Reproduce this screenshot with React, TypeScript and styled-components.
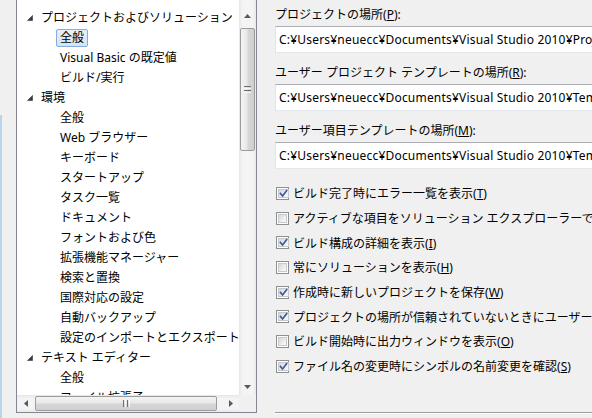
import React from 'react';
import styled, { createGlobalStyle } from 'styled-components';

const GlobalStyle = createGlobalStyle`
  html, body {
    margin: 0;
    padding: 0;
    background: #f0f0f0;
    overflow: hidden;
  }
  body {
    width: 592px;
    height: 418px;
    font-family: "Noto Sans", "Noto Sans CJK JP", sans-serif;
    font-size: 12px;
    color: #000;
  }
`;

const Window = styled.div`
  display: flex;
  align-items: flex-start;
  width: 592px;
  height: 418px;
  overflow: hidden;
`;

const Sidebar = styled.div`
  flex: 0 0 257px;
  height: 418px;
  box-sizing: border-box;
  padding-left: 16px;
  background: linear-gradient(#bcd3ec, #bcd3ec) no-repeat 0 115px / 2px 100%;
`;

const TreePanel = styled.div`
  margin-top: -1px;
  width: 241px;
  height: 414px;
  box-sizing: border-box;
  border: 1px solid #828790;
  background: #fff;
  display: grid;
  grid-template-columns: 1fr 17px;
  grid-template-rows: 1fr 17px;
  overflow: hidden;
`;

const TreeBody = styled.div`
  padding-top: 8px;
  overflow: hidden;
  white-space: nowrap;
`;

const TreeRow = styled.div<{ $level: number }>`
  display: flex;
  align-items: center;
  height: 20px;
  padding-left: ${({ $level }) => ($level === 0 ? 10 : 39)}px;
`;

const Expander = styled.svg`
  flex: 0 0 6px;
  width: 6px;
  height: 6px;
  margin-right: 4px;
  margin-top: -1px;
`;

const NodeLabel = styled.span<{ $selected?: boolean }>`
  display: inline-block;
  height: 16px;
  line-height: 16px;
  padding: 0 3px;
  border: 1px solid ${({ $selected }) => ($selected ? '#84acdd' : 'transparent')};
  border-radius: 2px;
  background: ${({ $selected }) =>
    $selected ? 'linear-gradient(#e6f0fb, #d3e4f8)' : 'transparent'};
`;

const VScroll = styled.div`
  display: flex;
  flex-direction: column;
  align-items: center;
  background: linear-gradient(to right, #e6e6e6, #f4f4f4 20%, #f4f4f4 80%, #e9e9e9);
`;

const HScroll = styled.div`
  display: flex;
  align-items: center;
  background: linear-gradient(#e6e6e6, #f4f4f4 20%, #f4f4f4 80%, #e9e9e9);
`;

const Corner = styled.div`
  background: #f0f0f0;
`;

const ArrowCell = styled.div`
  flex: 0 0 17px;
  width: 17px;
  height: 17px;
  display: flex;
  align-items: center;
  justify-content: center;
`;

const TopArrowCell = styled.div`
  flex: 0 0 27px;
  display: flex;
  justify-content: center;
  padding-top: 14px;
  box-sizing: border-box;
`;

const Spacer = styled.div`
  flex: 1;
`;

const VThumb = styled.div`
  margin-top: 1px;
  width: 15px;
  height: 123px;
  box-sizing: border-box;
  border: 1px solid #9b9b9b;
  border-radius: 2px;
  background: linear-gradient(to right, #f4f4f4, #e8e8e8 45%, #d6d6d6 55%, #cfcfcf);
  display: flex;
  align-items: center;
  justify-content: center;
`;

const HThumb = styled.div`
  margin-left: 1px;
  width: 182px;
  height: 15px;
  box-sizing: border-box;
  border: 1px solid #9b9b9b;
  border-radius: 2px;
  background: linear-gradient(#f4f4f4, #e8e8e8 45%, #d6d6d6 55%, #cfcfcf);
  display: flex;
  align-items: center;
  justify-content: center;
`;

const Content = styled.div`
  flex: 0 0 340px;
  margin-left: 18px;
  padding-top: 5px;
  white-space: nowrap;
`;

const FieldLabel = styled.div`
  height: 20px;
  line-height: 20px;
`;

const PathBox = styled.div`
  margin-top: 1px;
  margin-bottom: 10px;
  height: 27px;
  box-sizing: border-box;
  padding-left: 3px;
  line-height: 26px;
  letter-spacing: 0.2px;
  background: #fff;
  border: 1px solid #dbdfe6;
  border-top-color: #abadb3;
  border-left-color: #e2e3ea;
  border-bottom-color: #e3e9ef;
  overflow: hidden;
`;

const CheckList = styled.div`
  margin-top: 12px;
`;

const CheckRow = styled.div`
  display: flex;
  align-items: center;
  height: 24.7px;
  padding-left: 1px;
`;

const Box = styled.span`
  flex: 0 0 13px;
  width: 13px;
  height: 13px;
  margin-right: 4px;
  box-sizing: border-box;
  border: 1px solid #8e8f8f;
  background: #fff;
  padding: 1px;
  display: flex;
`;

const BoxInner = styled.span`
  flex: 1;
  border: 1px solid #c6c9cd;
  background: linear-gradient(135deg, #d4d7db, #f2f2f2 70%, #fafafa);
  display: flex;
  align-items: center;
  justify-content: center;
`;

const Separator = styled.div`
  margin-top: 33px;
  border-top: 1px solid #a0a0a0;
  border-bottom: 1px solid #fff;
`;

type Node = { label: string; level: number; selected?: boolean };

const nodes: Node[] = [
  { label: 'プロジェクトおよびソリューション', level: 0 },
  { label: '全般', level: 1, selected: true },
  { label: 'Visual Basic の既定値', level: 1 },
  { label: 'ビルド/実行', level: 1 },
  { label: '環境', level: 0 },
  { label: '全般', level: 1 },
  { label: 'Web ブラウザー', level: 1 },
  { label: 'キーボード', level: 1 },
  { label: 'スタートアップ', level: 1 },
  { label: 'タスク一覧', level: 1 },
  { label: 'ドキュメント', level: 1 },
  { label: 'フォントおよび色', level: 1 },
  { label: '拡張機能マネージャー', level: 1 },
  { label: '検索と置換', level: 1 },
  { label: '国際対応の設定', level: 1 },
  { label: '自動バックアップ', level: 1 },
  { label: '設定のインポートとエクスポート', level: 1 },
  { label: 'テキスト エディター', level: 0 },
  { label: '全般', level: 1 },
  { label: 'ファイル拡張子', level: 1 },
];

const fields = [
  { label: 'プロジェクトの場所', key: 'P', path: 'C:¥Users¥neuecc¥Documents¥Visual Studio 2010¥Projects' },
  { label: 'ユーザー プロジェクト テンプレートの場所', key: 'R', path: 'C:¥Users¥neuecc¥Documents¥Visual Studio 2010¥Templates¥ProjectTemplates' },
  { label: 'ユーザー項目テンプレートの場所', key: 'M', path: 'C:¥Users¥neuecc¥Documents¥Visual Studio 2010¥Templates¥ItemTemplates' },
];

const options = [
  { label: 'ビルド完了時にエラー一覧を表示', key: 'T', checked: true },
  { label: 'アクティブな項目をソリューション エクスプローラーで選択された状態にする', key: 'K', checked: false },
  { label: 'ビルド構成の詳細を表示', key: 'I', checked: true },
  { label: '常にソリューションを表示', key: 'H', checked: false },
  { label: '作成時に新しいプロジェクトを保存', key: 'W', checked: true },
  { label: 'プロジェクトの場所が信頼されていないときにユーザーに警告する', key: 'N', checked: true },
  { label: 'ビルド開始時に出力ウィンドウを表示', key: 'O', checked: false },
  { label: 'ファイル名の変更時にシンボルの名前変更を確認', key: 'S', checked: true },
];

const Tri = ({ dir }: { dir: 'up' | 'down' | 'left' | 'right' }) => {
  const pts = {
    up: '0,4 3.5,0 7,4',
    down: '0,0 7,0 3.5,4',
    left: '4,0 4,7 0,3.5',
    right: '0,0 0,7 4,3.5',
  }[dir];
  const vertical = dir === 'up' || dir === 'down';
  return (
    <svg width={vertical ? 7 : 4} height={vertical ? 4 : 7} viewBox={vertical ? '0 0 7 4' : '0 0 4 7'}>
      <polygon points={pts} fill="#5a5a5a" />
    </svg>
  );
};

const Grip = ({ vertical }: { vertical?: boolean }) =>
  vertical ? (
    <svg width="7" height="7" viewBox="0 0 7 7">
      {[0, 2, 4, 6].map((y) => (
        <line key={y} x1="0" x2="7" y1={y + 0.5} y2={y + 0.5} stroke={y % 4 === 0 ? '#6f6f6f' : '#f8f8f8'} />
      ))}
    </svg>
  ) : (
    <svg width="7" height="7" viewBox="0 0 7 7">
      {[0, 2, 4, 6].map((x) => (
        <line key={x} y1="0" y2="7" x1={x + 0.5} x2={x + 0.5} stroke={x % 4 === 0 ? '#6f6f6f' : '#f8f8f8'} />
      ))}
    </svg>
  );

const Check = () => (
  <svg width="9" height="9" viewBox="0 0 9 9">
    <path d="M1.5 4.5 L3.6 7 L7.6 1.6" fill="none" stroke="#3d5a9a" strokeWidth="1.7" strokeLinecap="square" />
  </svg>
);

const Accel = ({ k }: { k: string }) => (
  <>
    (<u>{k}</u>)
  </>
);

export default function App() {
  return (
    <>
      <GlobalStyle />
      <Window>
        <Sidebar>
          <TreePanel>
            <TreeBody>
              {nodes.map((n, i) => (
                <TreeRow key={i} $level={n.level}>
                  {n.level === 0 && (
                    <Expander viewBox="0 0 6 6">
                      <polygon points="5.5,0.5 5.5,5.5 0.5,5.5" fill="#3a3a3a" stroke="#3a3a3a" strokeWidth="0.6" />
                    </Expander>
                  )}
                  <NodeLabel $selected={n.selected}>{n.label}</NodeLabel>
                </TreeRow>
              ))}
            </TreeBody>
            <VScroll>
              <TopArrowCell>
                <Tri dir="up" />
              </TopArrowCell>
              <VThumb>
                <Grip vertical />
              </VThumb>
              <Spacer />
              <ArrowCell>
                <Tri dir="down" />
              </ArrowCell>
            </VScroll>
            <HScroll>
              <ArrowCell>
                <Tri dir="left" />
              </ArrowCell>
              <HThumb>
                <Grip />
              </HThumb>
              <Spacer />
              <ArrowCell>
                <Tri dir="right" />
              </ArrowCell>
            </HScroll>
            <Corner />
          </TreePanel>
        </Sidebar>
        <Content>
          {fields.map((f) => (
            <div key={f.key}>
              <FieldLabel>
                {f.label}
                <Accel k={f.key} />:
              </FieldLabel>
              <PathBox>{f.path}</PathBox>
            </div>
          ))}
          <CheckList>
            {options.map((o) => (
              <CheckRow key={o.key}>
                <Box>
                  <BoxInner>{o.checked && <Check />}</BoxInner>
                </Box>
                <span>
                  {o.label}
                  <Accel k={o.key} />
                </span>
              </CheckRow>
            ))}
          </CheckList>
          <Separator />
        </Content>
      </Window>
    </>
  );
}
